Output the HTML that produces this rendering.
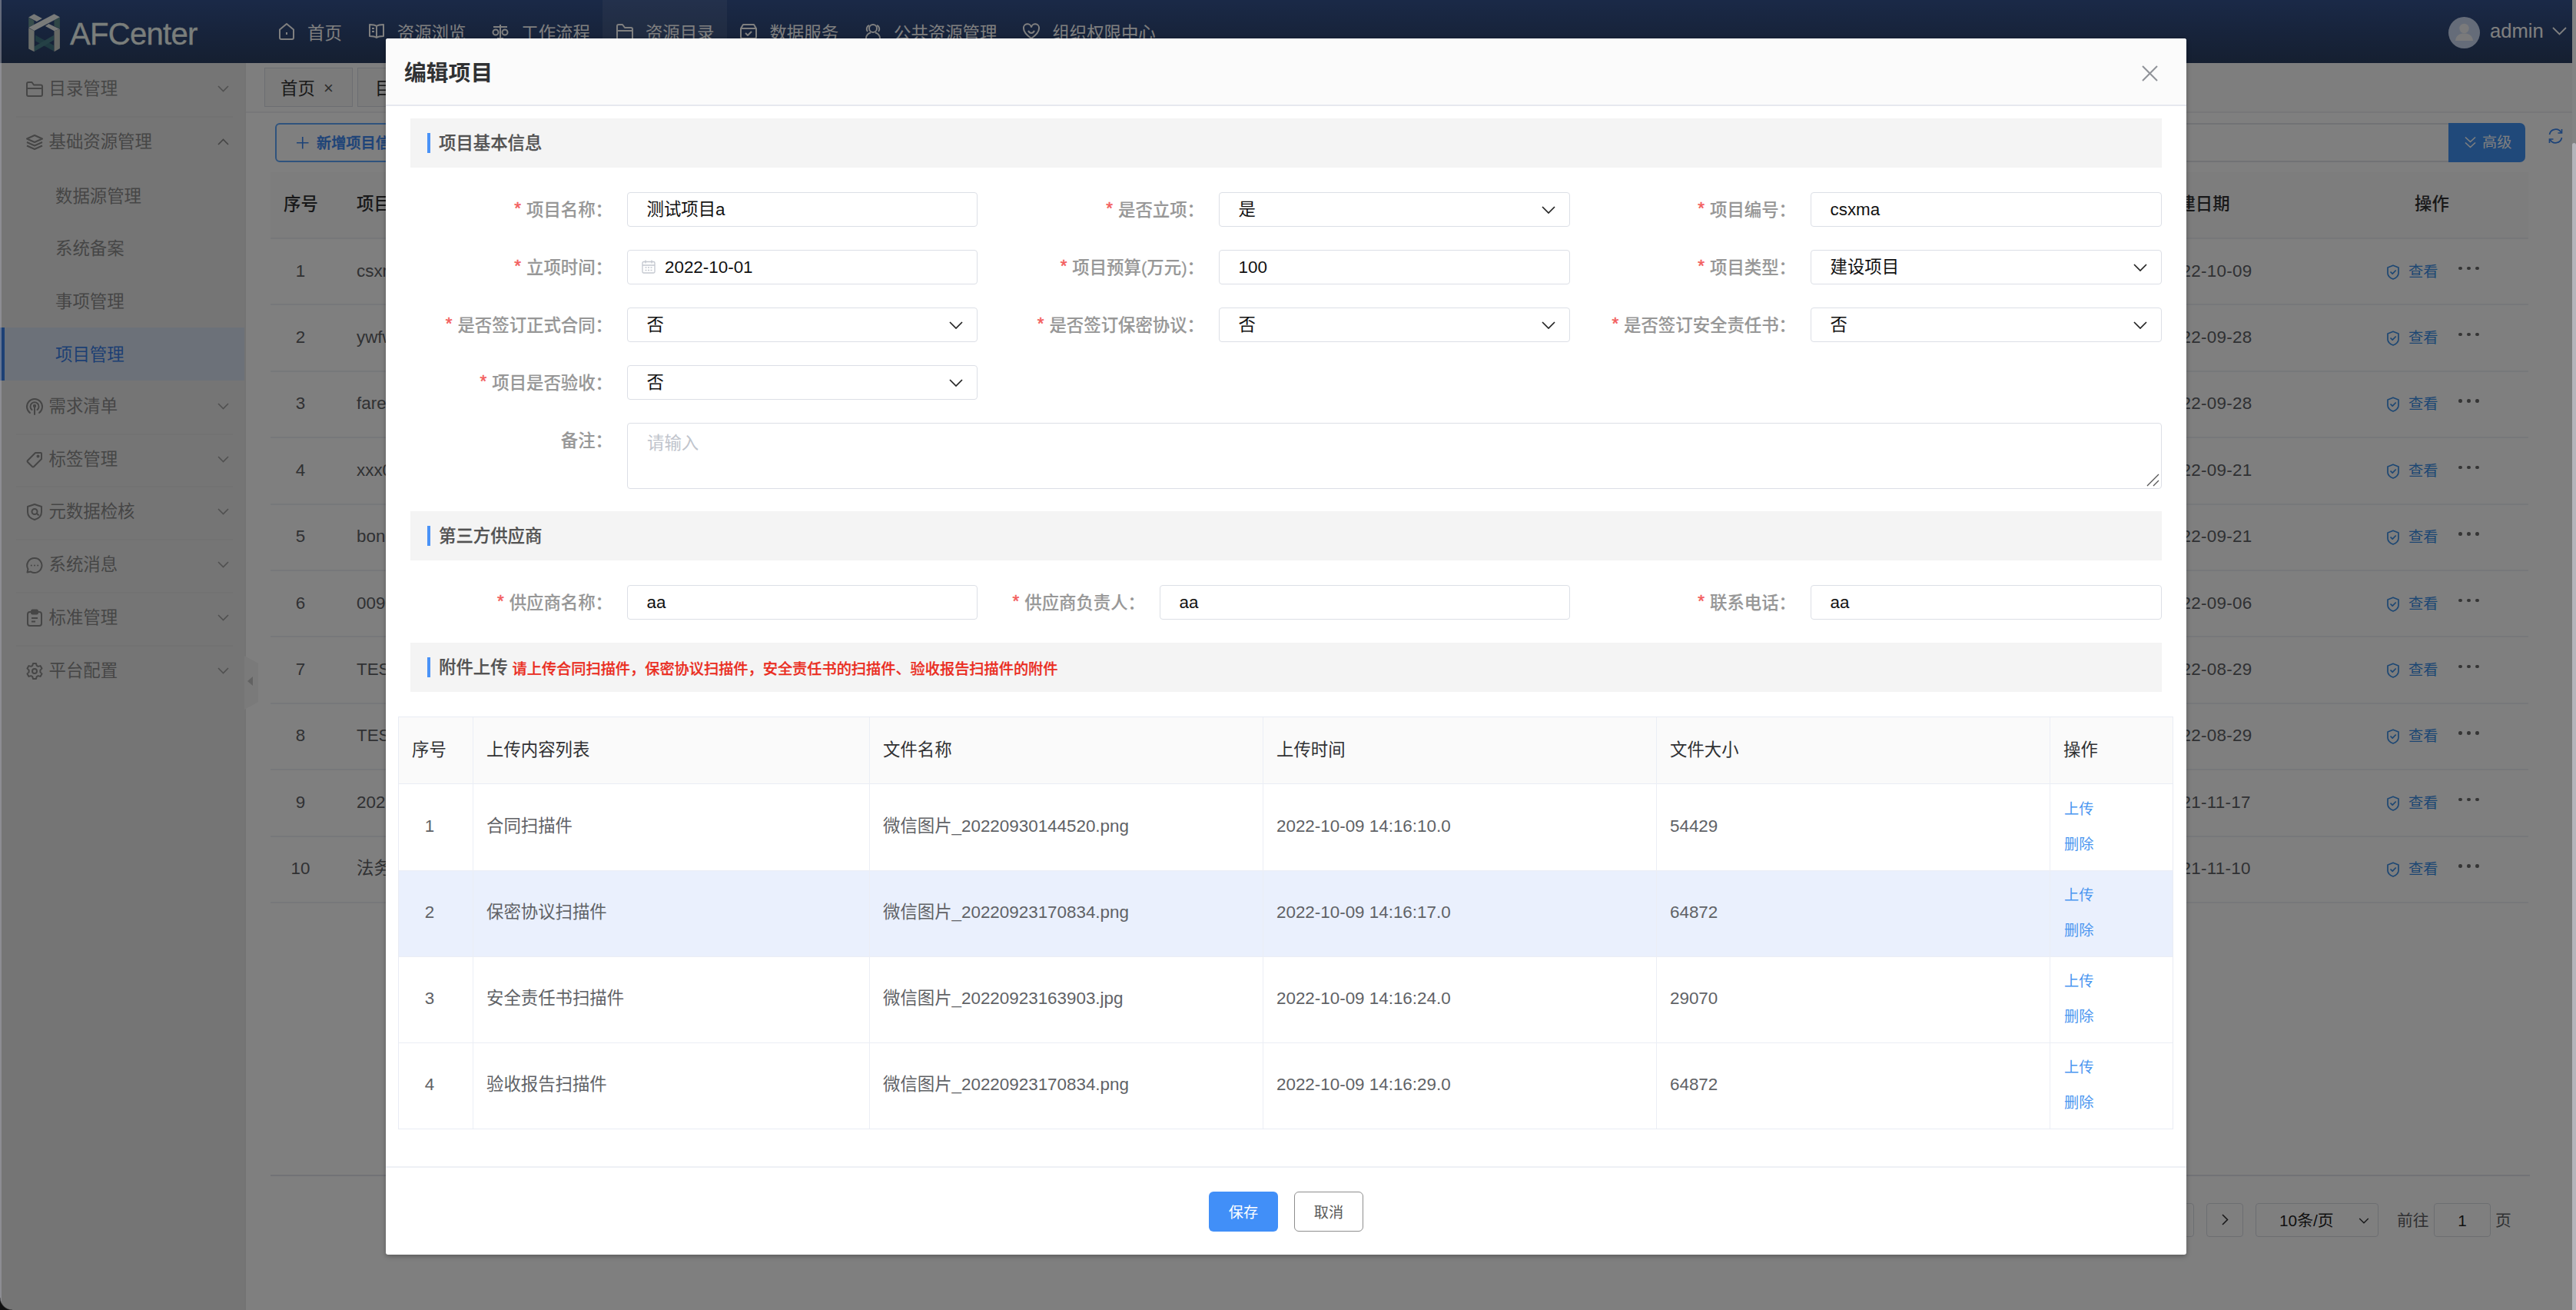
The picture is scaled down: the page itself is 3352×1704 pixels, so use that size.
<!DOCTYPE html>
<html lang="zh-CN">
<head>
<meta charset="utf-8">
<title>AFCenter - 编辑项目</title>
<style>
*{box-sizing:border-box;margin:0;padding:0}
html,body{width:3352px;height:1704px;overflow:hidden;background:#fff}
body{position:relative;font-family:"Liberation Sans","Noto Sans CJK SC",sans-serif;font-size:22.4px;color:#333;-webkit-font-smoothing:antialiased}
svg{display:block}
.abs{position:absolute}
/* ---------- app background ---------- */
#app{position:absolute;left:0;top:0;width:3352px;height:1704px;background:#fff;overflow:hidden}
#hdr{position:absolute;left:0;top:0;width:3352px;height:82px;background:linear-gradient(180deg,#35538f 0%,#2f4878 50%,#2b3f62 100%)}
#logo{position:absolute;left:37px;top:18px;width:41px;height:50px}
#brand{position:absolute;left:91px;top:12.500px;font-family:"Liberation Sans",sans-serif;font-size:40px;line-height:62px;color:#f4fcf7;letter-spacing:-0.700px;-webkit-text-stroke:0.3px #f4fcf7}
#nav{position:absolute;left:344.500px;top:0;height:82px;display:flex}
.nv{height:82px;padding:0 16.500px;display:flex;align-items:center;color:#fff;font-size:22.4px;white-space:nowrap}
.nv svg{width:24px;height:24px;margin-right:15px;flex:none;position:relative;top:0}
.nv.on{background:rgba(255,255,255,.09)}
.nv span{position:relative;top:-0.500px}
#user{position:absolute;left:3186px;top:22px;width:41px;height:41px;border-radius:50%;background:#cbd9f2;overflow:hidden}
#uname{position:absolute;left:3240px;top:25px;font-size:25.6px;line-height:30px;color:#fff}
#ucaret{position:absolute;left:3321px;top:35px;width:19px;height:11px}
/* sidebar */
#side{position:absolute;left:0;top:82px;width:320px;height:1622px;background:#ebebeb;border-right:2px solid #e6e6e6}
.mi{position:absolute;left:0;width:318px;height:68.8px;color:#8c8c8c;font-size:22.4px;line-height:68.8px}
.mi .ic{position:absolute;left:33px;top:22px;width:24px;height:24px}
.mi .tx{position:absolute;left:63.500px;top:0}
.mi .ar{position:absolute;left:283px;top:29px;width:15px;height:9px}
.mi.sub .tx{left:72px;top:2px}
.mi.sep:after{content:"";position:absolute;left:21px;right:15px;bottom:-2px;height:2px;background:#e5e5e5}
.mi.act{background:#d9e3f3;color:#3a7ee6}
.mi.act:before{content:"";position:absolute;left:0;top:0;width:6px;height:100%;background:#3b80ea}
/* main */
#tabs{position:absolute;left:320px;top:82px;width:3032px;height:65px;background:#fcfcfc;border-bottom:2px solid #eeeef2}
.tab{position:absolute;top:6px;height:51px;border:1.5px solid #d8dce5;background:#f6f6f6;font-size:22.4px;line-height:53px;color:#333}
/* overlay + modal */
#mask{position:absolute;left:0;top:0;width:3352px;height:1704px;background:rgba(0,0,0,.5)}
#dlg{position:absolute;left:502px;top:50px;width:2343px;height:1582px;background:#fff;border-radius:3px;box-shadow:0 2px 6px rgba(0,0,0,.3)}
#dh{position:absolute;left:0;top:0;width:100%;height:88px;background:#fbfbfb;border-bottom:2px solid #e6e8ef;border-radius:3px 3px 0 0}
#dt{position:absolute;left:24px;top:26.500px;font-size:28.8px;line-height:36px;font-weight:700;color:#303133}
#dx{position:absolute;left:2285px;top:35px;width:21px;height:21px}

/* background main */
.bgline{position:absolute;height:2px;background:#e6e9f0}
#addbtn{position:absolute;left:358px;top:160px;width:330px;height:51px;border:2px solid #5ea6fb;border-radius:6px;color:#3a86f0;font-weight:500;-webkit-text-stroke:0.4px currentColor;font-size:19.2px;line-height:50px;padding-left:52px;white-space:nowrap;background:#fff}
#addbtn svg{position:absolute;left:26px;top:16px;width:15.500px;height:15.500px}
#srch{position:absolute;left:2600px;top:160px;width:590px;height:51px;border:2px solid #e2e5eb;border-right:none;background:#fff}
#adv{position:absolute;left:3186px;top:160px;width:100px;height:51px;background:#4093f5;border-radius:0 7px 7px 0;color:#fff;font-size:19.2px;line-height:51px;padding-left:44px}
#adv svg{position:absolute;left:21px;top:17px;width:15px;height:17px}
#refresh{position:absolute;left:3315px;top:166px;width:21px;height:22px}
#th{position:absolute;left:352px;top:224px;width:2938px;height:87px;background:#fafafa;border-bottom:2px solid #eceef3}
.tht{position:absolute;top:225px;height:84px;line-height:82px;font-size:22.4px;color:#303133;font-weight:500;white-space:nowrap}
.tr{position:absolute;left:352px;width:2938px;height:86.4px;border-bottom:2px solid #eff1f5}
.td{position:absolute;font-size:22.4px;line-height:30px;color:#606266;white-space:nowrap}
.view{position:absolute;left:3105px;color:#3a8ee6;font-size:19.2px;line-height:26px;padding-left:29px;white-space:nowrap}
.view svg{position:absolute;left:0;top:3px;width:18px;height:20px}
.dots{position:absolute;left:3199px;width:28px;height:6px}
.dots i{position:absolute;top:0;width:4.600px;height:4.600px;border-radius:50%;background:#6a6a6a}
.pbox{position:absolute;top:1565px;height:44px;border:1.500px solid #d9dce3;border-radius:4px;background:#fff}
.ptx{position:absolute;top:1565px;height:44px;line-height:46px;font-size:20.8px;color:#606266;white-space:nowrap}
/* dialog form */
.sec{position:absolute;left:32px;width:2279px;height:64px;background:#f4f4f4}
.sec:before{content:"";position:absolute;left:21.5px;top:19px;width:4.500px;height:26px;background:#4a93f7}
.sec b{position:absolute;left:37px;top:0;line-height:66px;font-size:22.4px;font-weight:500;-webkit-text-stroke:0.25px currentColor;color:#525252;white-space:nowrap}
.sec b em{font-style:normal;font-size:19.2px;color:#ea2d1f;margin-left:6px;position:relative;top:0.500px}
.lb{position:absolute;height:48px;line-height:47px;text-align:right;font-size:22.4px;font-weight:500;-webkit-text-stroke:0.15px currentColor;color:#979797;white-space:nowrap}
.lb i{font-style:normal;color:#f35e5e;margin-right:7px;font-weight:400;-webkit-text-stroke:0.5px #f35e5e;position:relative;top:-3px;font-family:"Liberation Sans",sans-serif}
.in{position:absolute;height:44.500px;border:1.500px solid #dcdfe6;border-radius:4px;background:#fff;font-size:22.4px;line-height:44px;color:#111;padding-left:24.500px;white-space:nowrap}
.in .cv{position:absolute;right:18px;top:16.500px;width:18px;height:10px}
.in .cal{position:absolute;left:18px;top:12px;width:18px;height:18px}
#ta{position:absolute;left:314px;top:500px;width:1996.500px;height:85.500px;border:1.500px solid #dcdfe6;border-radius:4px;background:#fff;font-size:22.4px;line-height:30px;color:#c0c4cc;padding:10.500px 0 0 25px}
#ta svg{position:absolute;right:2px;bottom:2px;width:17px;height:17px}
/* dialog table */
#tb{position:absolute;left:16px;top:882px;width:2310px;height:536px;border:1.500px solid #e9ecf4;background:#fff}
#tbh{position:absolute;left:0;top:0;width:100%;height:87px;background:#fafafa;border-bottom:1.500px solid #e9ecf4}
.vl{position:absolute;top:0;width:1.500px;height:100%;background:#ebeef5}
.hl{position:absolute;left:0;width:100%;height:1.500px;background:#ebeef5}
.hx{position:absolute;top:0;height:87px;line-height:85px;font-size:22.4px;color:#303133;white-space:nowrap}
.cx{position:absolute;font-size:22.4px;line-height:30px;color:#606266;white-space:nowrap}
.lk{position:absolute;font-size:19.2px;line-height:26px;color:#4a96f0;white-space:nowrap}
#rowhi{position:absolute;left:0;top:200px;width:100%;height:112px;background:#eaf0fd}
#df{position:absolute;left:0;top:1466.500px;width:100%;height:2px;background:#eef0f5}
.btn{position:absolute;top:1500px;width:90px;height:52px;border-radius:6px;font-size:19.2px;line-height:53px;text-align:center}
#bsave{left:1071px;background:#418ff8;color:#fff;line-height:55.500px}
#bcancel{left:1182px;background:#fff;border:1.500px solid #8e8e8e;color:#5a5a5a}
</style>
</head>
<body>
<div id="app">
  <div id="hdr">
    <svg id="logo" viewBox="0 0 41 50"><polygon points="0.2,4.800 7.300,8.900 7.300,13.900 0.200,17.400" fill="#6f9a98"/><polygon points="33.500,8.300 40.900,4.500 40.900,19.400 33.500,16" fill="#5e8d8c"/><polygon points="9.100,27.800 33,40.900 33,48.400 9.100,35.300" fill="#3f7582"/><polygon points="33,27.800 33,34.300 7.600,48.900 7.600,42.400" fill="#4a828c"/><polygon points="0.200,18.200 7.600,22.200 7.600,49.300 0.200,45.400" fill="#d7dcd4"/><polygon points="33.500,22.200 40.900,19.700 40.900,45 33.500,49.300" fill="#cfd3cb"/><polygon points="7.300,0.200 17.900,6.100 10.800,10.100 0.200,4.500" fill="#eef3f0"/><polygon points="26.400,13.100 40.600,19.700 33.500,22.200 21.900,16.100" fill="#eef3f0"/><polygon points="33.500,0.200 40.900,4.200 7.600,22 0.200,17.700" fill="#f3f7f4"/></svg>
    <div id="brand">AFCenter</div>
    <div id="nav">
      <div class="nv"><svg viewBox="0 0 24 24" fill="none" stroke="#fff" stroke-width="2" stroke-linejoin="round"><path d="M3 9.5L12 2l9 7.5V20a2 2 0 0 1-2 2H5a2 2 0 0 1-2-2z"/><path d="M12 13v3"/></svg><span>首页</span></div>
      <div class="nv"><svg viewBox="0 0 24 24" fill="none" stroke="#fff" stroke-width="2" stroke-linejoin="round"><path d="M12 5v15M12 5c-2-1.5-5-2-9-2v15c4 0 7 .5 9 2 2-1.500 5-2 9-2V3c-4 0-7 .5-9 2z"/><path d="M6 8h3M6 12h3"/></svg><span>资源浏览</span></div>
      <div class="nv"><svg viewBox="0 0 24 24" fill="none" stroke="#fff" stroke-width="2"><path d="M12 3v18M3 6h18M8 21h8"/><circle cx="6" cy="13" r="3.500"/><circle cx="18" cy="13" r="3.500"/></svg><span>工作流程</span></div>
      <div class="nv on"><svg viewBox="0 0 24 24" fill="none" stroke="#fff" stroke-width="2" stroke-linejoin="round"><path d="M2 21V5a2 2 0 0 1 2-2h5l3 4h8a2 2 0 0 1 2 2v12"/><path d="M2 11h20"/></svg><span>资源目录</span></div>
      <div class="nv"><svg viewBox="0 0 24 24" fill="none" stroke="#fff" stroke-width="2" stroke-linejoin="round"><path d="M2 8l3-5h14l3 5v11a2 2 0 0 1-2 2H4a2 2 0 0 1-2-2z"/><path d="M2 8h20M8 14l3 3 5-5"/></svg><span>数据服务</span></div>
      <div class="nv"><svg viewBox="0 0 24 24" fill="none" stroke="#fff" stroke-width="2"><circle cx="12" cy="8" r="5"/><path d="M3 21c0-4 3-7 6-7.500M21 21c0-4-3-7-6-7.500"/><path d="M17 4a5 5 0 0 1 2 8M7 4a5 5 0 0 0-2 8"/></svg><span>公共资源管理</span></div>
      <div class="nv"><svg viewBox="0 0 24 24" fill="none" stroke="#fff" stroke-width="2"><path d="M12 21C5 16 2 12 2 8a5 5 0 0 1 10-1.500A5 5 0 0 1 22 8c0 4-3 8-10 13z"/><path d="M8 11c1 2 2.500 3 4 3s3-1 4-3"/></svg><span>组织权限中心</span></div>
    </div>
    <div id="user"><svg viewBox="0 0 41 41"><circle cx="20.500" cy="15" r="6.200" fill="#f4f5f7"/><path d="M9 31c1-7 5-9.500 11.500-9.500S31 24 32 31z" fill="#f4f5f7"/></svg></div>
    <div id="uname">admin</div>
    <svg id="ucaret" viewBox="0 0 19 11" fill="none" stroke="#fff" stroke-width="1.800"><path d="M1 1l8.500 8.500L18 1"/></svg>
  </div>
  <div id="side">
    <div class="mi sep" style="top:0.0px"><svg class="ic" viewBox="0 0 24 24" fill="none" stroke="#8c8c8c" stroke-width="2" stroke-linejoin="round"><path d="M2 19V5a2 2 0 0 1 2-2h4.500l2.500 3.500H20a2 2 0 0 1 2 2V19a2 2 0 0 1-2 2H4a2 2 0 0 1-2-2z"/><path d="M2 11h20"/></svg><span class="tx">目录管理</span><svg class="ar" viewBox="0 0 15 9" fill="none" stroke="#a0a0a0" stroke-width="1.600"><path d="M1 1l6.500 6.500L14 1"/></svg></div>
    <div class="mi" style="top:68.8px"><svg class="ic" viewBox="0 0 24 24" fill="none" stroke="#8c8c8c" stroke-width="2" stroke-linejoin="round"><path d="M12 3l10 4.500-10 4.500L2 7.500z"/><path d="M2 12l10 4.500L22 12M2 16.500L12 21l10-4.500"/></svg><span class="tx">基础资源管理</span><svg class="ar" viewBox="0 0 15 9" fill="none" stroke="#8a8a8a" stroke-width="1.600"><path d="M1 8l6.500-6.500L14 8"/></svg></div>
    <div class="mi sub" style="top:137.6px"><span class="tx">数据源管理</span></div>
    <div class="mi sub" style="top:206.4px"><span class="tx">系统备案</span></div>
    <div class="mi sub" style="top:275.2px"><span class="tx">事项管理</span></div>
    <div class="mi sub act" style="top:344.0px"><span class="tx">项目管理</span></div>
    <div class="mi sep" style="top:412.8px"><svg class="ic" viewBox="0 0 24 24" fill="none" stroke="#8c8c8c" stroke-width="2" stroke-linecap="round"><path d="M6 20a10 10 0 1 1 12 0"/><path d="M8.500 16a5.500 5.500 0 1 1 7 0"/><path d="M12 11.500V22"/><circle cx="12" cy="11" r="1.200" fill="#8c8c8c"/></svg><span class="tx">需求清单</span><svg class="ar" viewBox="0 0 15 9" fill="none" stroke="#a0a0a0" stroke-width="1.600"><path d="M1 1l6.500 6.500L14 1"/></svg></div>
    <div class="mi sep" style="top:481.6px"><svg class="ic" viewBox="0 0 24 24" fill="none" stroke="#8c8c8c" stroke-width="2" stroke-linejoin="round"><path d="M13 3h7a1 1 0 0 1 1 1v7L11 21a1.400 1.400 0 0 1-2 0l-6-6a1.400 1.400 0 0 1 0-2z"/><circle cx="16.500" cy="7.500" r="1" fill="#8c8c8c"/></svg><span class="tx">标签管理</span><svg class="ar" viewBox="0 0 15 9" fill="none" stroke="#a0a0a0" stroke-width="1.600"><path d="M1 1l6.500 6.500L14 1"/></svg></div>
    <div class="mi sep" style="top:550.4px"><svg class="ic" viewBox="0 0 24 24" fill="none" stroke="#8c8c8c" stroke-width="2" stroke-linejoin="round"><path d="M12 2l9 3v7c0 5-4 8.500-9 10-5-1.500-9-5-9-10V5z"/><circle cx="12" cy="11.500" r="3.500"/><path d="M15 14l2.500 2.500"/></svg><span class="tx">元数据检核</span><svg class="ar" viewBox="0 0 15 9" fill="none" stroke="#a0a0a0" stroke-width="1.600"><path d="M1 1l6.500 6.500L14 1"/></svg></div>
    <div class="mi sep" style="top:619.2px"><svg class="ic" viewBox="0 0 24 24" fill="none" stroke="#8c8c8c" stroke-width="2" stroke-linejoin="round"><path d="M12 3a9.500 9.500 0 1 1-5 17.600L2.500 21.500l1-4.300A9.500 9.500 0 0 1 12 3z"/><circle cx="7.800" cy="12.500" r="1" fill="#8c8c8c" stroke="none"/><circle cx="12" cy="12.500" r="1" fill="#8c8c8c" stroke="none"/><circle cx="16.200" cy="12.500" r="1" fill="#8c8c8c" stroke="none"/></svg><span class="tx">系统消息</span><svg class="ar" viewBox="0 0 15 9" fill="none" stroke="#a0a0a0" stroke-width="1.600"><path d="M1 1l6.500 6.500L14 1"/></svg></div>
    <div class="mi sep" style="top:688.0px"><svg class="ic" viewBox="0 0 24 24" fill="none" stroke="#8c8c8c" stroke-width="2" stroke-linejoin="round"><rect x="3" y="4" width="18" height="18" rx="3"/><rect x="8" y="1.500" width="8" height="5" rx="1.500" fill="#8c8c8c"/><path d="M8 12h8M8 16.500h5"/></svg><span class="tx">标准管理</span><svg class="ar" viewBox="0 0 15 9" fill="none" stroke="#a0a0a0" stroke-width="1.600"><path d="M1 1l6.500 6.500L14 1"/></svg></div>
    <div class="mi" style="top:756.8px"><svg class="ic" viewBox="0 0 24 24" fill="none" stroke="#8c8c8c" stroke-width="2" stroke-linejoin="round"><path d="M10 2h4l.7 2.800 2 1.100 2.800-.8 2 3.500-2.100 2v2.800l2.100 2-2 3.500-2.800-.8-2 1.100L14 22h-4l-.7-2.800-2-1.100-2.800.8-2-3.500 2.100-2v-2.800l-2.100-2 2-3.500 2.800.8 2-1.100z"/><circle cx="12" cy="12" r="3"/></svg><span class="tx">平台配置</span><svg class="ar" viewBox="0 0 15 9" fill="none" stroke="#a0a0a0" stroke-width="1.600"><path d="M1 1l6.500 6.500L14 1"/></svg></div>
    <div class="abs" style="left:318px;top:771px;width:18px;height:70px;background:#f4f4f4;clip-path:polygon(0 0,100% 14%,100% 86%,0 100%);border-radius:0 8px 8px 0"><svg viewBox="0 0 8 12" style="position:absolute;left:4px;top:26px;width:8px;height:14px"><path d="M7 0L0 6l7 6z" fill="#c4c4c4"/></svg></div>
  </div>
  <div id="tabs">
    <div class="tab" style="left:24px;width:115px;padding-left:20px">首页<span style="position:absolute;left:76px;top:-1.500px;font-size:22px;color:#5a5a5a;font-family:'Liberation Sans',sans-serif">×</span></div>
    <div class="tab" style="left:145px;width:170px;padding-left:22px">目录管理<span style="position:absolute;left:128px;top:-1.500px;font-size:22px;color:#5a5a5a">×</span></div>
    <div class="tab" style="left:321px;width:170px;padding-left:22px">项目管理<span style="position:absolute;left:128px;top:-1.500px;font-size:22px;color:#5a5a5a">×</span></div>
  </div>
  <div id="addbtn"><svg viewBox="0 0 17 17" stroke="#3a86f0" stroke-width="1.800"><path d="M8.500 0v17M0 8.500h17"/></svg>新增项目信息</div>
  <div id="srch"></div><div id="adv"><svg viewBox="0 0 15 17" fill="none" stroke="#fff" stroke-width="1.600"><path d="M1 1.500l6.500 6L14 1.500M1 8.500l6.500 6 6.500-6"/></svg>高级</div>
  <svg id="refresh" viewBox="0 0 21 22" fill="none" stroke="#3a86f0" stroke-width="1.700"><path d="M2.500 9A8.200 8.200 0 0 1 17.800 6.500M18.500 13A8.200 8.200 0 0 1 3.200 15.500"/><path d="M18.500 2v5h-5M2.500 20v-5h5"/></svg>
  <div id="th"></div>
  <div class="tht" style="left:369px">序号</div><div class="tht" style="left:464px">项目名称</div><div class="tht" style="left:2812px">创建日期</div><div class="tht" style="left:3142px">操作</div>
  <div class="tr" style="top:311.0px"></div>
  <div class="td" style="left:352px;width:78px;text-align:center;top:337.5px">1</div>
  <div class="td" style="left:464px;top:337.5px">csxma</div>
  <div class="td" style="left:2813px;letter-spacing:0.300px;top:337.5px">2022-10-09</div>
  <div class="view" style="top:340.5px"><svg viewBox="0 0 18 20" fill="none" stroke="#3a8ee6" stroke-width="1.700" stroke-linejoin="round"><path d="M9 1.200l7 2.800v7.200c0 3.600-3 6.300-7 7.800-4-1.500-7-4.200-7-7.800V4z"/><path d="M5.500 9.500l2.700 2.700 4.500-4.700"/></svg>查看</div>
  <div class="dots" style="top:346.5px"><i style="left:0"></i><i style="left:11px"></i><i style="left:22px"></i></div>
  <div class="tr" style="top:397.4px"></div>
  <div class="td" style="left:352px;width:78px;text-align:center;top:423.9px">2</div>
  <div class="td" style="left:464px;top:423.9px">ywfw01</div>
  <div class="td" style="left:2813px;letter-spacing:0.300px;top:423.9px">2022-09-28</div>
  <div class="view" style="top:426.9px"><svg viewBox="0 0 18 20" fill="none" stroke="#3a8ee6" stroke-width="1.700" stroke-linejoin="round"><path d="M9 1.200l7 2.800v7.200c0 3.600-3 6.300-7 7.800-4-1.500-7-4.200-7-7.800V4z"/><path d="M5.500 9.500l2.700 2.700 4.500-4.700"/></svg>查看</div>
  <div class="dots" style="top:432.9px"><i style="left:0"></i><i style="left:11px"></i><i style="left:22px"></i></div>
  <div class="tr" style="top:483.8px"></div>
  <div class="td" style="left:352px;width:78px;text-align:center;top:510.3px">3</div>
  <div class="td" style="left:464px;top:510.3px">fare01</div>
  <div class="td" style="left:2813px;letter-spacing:0.300px;top:510.3px">2022-09-28</div>
  <div class="view" style="top:513.3px"><svg viewBox="0 0 18 20" fill="none" stroke="#3a8ee6" stroke-width="1.700" stroke-linejoin="round"><path d="M9 1.200l7 2.800v7.200c0 3.600-3 6.300-7 7.800-4-1.500-7-4.200-7-7.800V4z"/><path d="M5.500 9.500l2.700 2.700 4.500-4.700"/></svg>查看</div>
  <div class="dots" style="top:519.3px"><i style="left:0"></i><i style="left:11px"></i><i style="left:22px"></i></div>
  <div class="tr" style="top:570.2px"></div>
  <div class="td" style="left:352px;width:78px;text-align:center;top:596.7px">4</div>
  <div class="td" style="left:464px;top:596.7px">xxx01</div>
  <div class="td" style="left:2813px;letter-spacing:0.300px;top:596.7px">2022-09-21</div>
  <div class="view" style="top:599.7px"><svg viewBox="0 0 18 20" fill="none" stroke="#3a8ee6" stroke-width="1.700" stroke-linejoin="round"><path d="M9 1.200l7 2.800v7.200c0 3.600-3 6.300-7 7.800-4-1.500-7-4.200-7-7.800V4z"/><path d="M5.500 9.500l2.700 2.700 4.500-4.700"/></svg>查看</div>
  <div class="dots" style="top:605.7px"><i style="left:0"></i><i style="left:11px"></i><i style="left:22px"></i></div>
  <div class="tr" style="top:656.6px"></div>
  <div class="td" style="left:352px;width:78px;text-align:center;top:683.1px">5</div>
  <div class="td" style="left:464px;top:683.1px">bond</div>
  <div class="td" style="left:2813px;letter-spacing:0.300px;top:683.1px">2022-09-21</div>
  <div class="view" style="top:686.1px"><svg viewBox="0 0 18 20" fill="none" stroke="#3a8ee6" stroke-width="1.700" stroke-linejoin="round"><path d="M9 1.200l7 2.800v7.200c0 3.600-3 6.300-7 7.800-4-1.500-7-4.200-7-7.800V4z"/><path d="M5.500 9.500l2.700 2.700 4.500-4.700"/></svg>查看</div>
  <div class="dots" style="top:692.1px"><i style="left:0"></i><i style="left:11px"></i><i style="left:22px"></i></div>
  <div class="tr" style="top:743.0px"></div>
  <div class="td" style="left:352px;width:78px;text-align:center;top:769.5px">6</div>
  <div class="td" style="left:464px;top:769.5px">0090</div>
  <div class="td" style="left:2813px;letter-spacing:0.300px;top:769.5px">2022-09-06</div>
  <div class="view" style="top:772.5px"><svg viewBox="0 0 18 20" fill="none" stroke="#3a8ee6" stroke-width="1.700" stroke-linejoin="round"><path d="M9 1.200l7 2.800v7.200c0 3.600-3 6.300-7 7.800-4-1.500-7-4.200-7-7.800V4z"/><path d="M5.500 9.500l2.700 2.700 4.500-4.700"/></svg>查看</div>
  <div class="dots" style="top:778.5px"><i style="left:0"></i><i style="left:11px"></i><i style="left:22px"></i></div>
  <div class="tr" style="top:829.4px"></div>
  <div class="td" style="left:352px;width:78px;text-align:center;top:855.9px">7</div>
  <div class="td" style="left:464px;top:855.9px">TEST2</div>
  <div class="td" style="left:2813px;letter-spacing:0.300px;top:855.9px">2022-08-29</div>
  <div class="view" style="top:858.9px"><svg viewBox="0 0 18 20" fill="none" stroke="#3a8ee6" stroke-width="1.700" stroke-linejoin="round"><path d="M9 1.200l7 2.800v7.200c0 3.600-3 6.300-7 7.800-4-1.500-7-4.200-7-7.800V4z"/><path d="M5.500 9.500l2.700 2.700 4.500-4.700"/></svg>查看</div>
  <div class="dots" style="top:864.9px"><i style="left:0"></i><i style="left:11px"></i><i style="left:22px"></i></div>
  <div class="tr" style="top:915.8px"></div>
  <div class="td" style="left:352px;width:78px;text-align:center;top:942.3px">8</div>
  <div class="td" style="left:464px;top:942.3px">TEST1</div>
  <div class="td" style="left:2813px;letter-spacing:0.300px;top:942.3px">2022-08-29</div>
  <div class="view" style="top:945.3px"><svg viewBox="0 0 18 20" fill="none" stroke="#3a8ee6" stroke-width="1.700" stroke-linejoin="round"><path d="M9 1.200l7 2.800v7.200c0 3.600-3 6.300-7 7.800-4-1.500-7-4.200-7-7.800V4z"/><path d="M5.500 9.500l2.700 2.700 4.500-4.700"/></svg>查看</div>
  <div class="dots" style="top:951.3px"><i style="left:0"></i><i style="left:11px"></i><i style="left:22px"></i></div>
  <div class="tr" style="top:1002.2px"></div>
  <div class="td" style="left:352px;width:78px;text-align:center;top:1028.7px">9</div>
  <div class="td" style="left:464px;top:1028.7px">2021xm</div>
  <div class="td" style="left:2813px;letter-spacing:0.300px;top:1028.7px">2021-11-17</div>
  <div class="view" style="top:1031.7px"><svg viewBox="0 0 18 20" fill="none" stroke="#3a8ee6" stroke-width="1.700" stroke-linejoin="round"><path d="M9 1.200l7 2.800v7.200c0 3.600-3 6.300-7 7.800-4-1.500-7-4.200-7-7.800V4z"/><path d="M5.500 9.500l2.700 2.700 4.500-4.700"/></svg>查看</div>
  <div class="dots" style="top:1037.7px"><i style="left:0"></i><i style="left:11px"></i><i style="left:22px"></i></div>
  <div class="tr" style="top:1088.6px"></div>
  <div class="td" style="left:352px;width:78px;text-align:center;top:1115.1px">10</div>
  <div class="td" style="left:464px;top:1115.1px">法务项目</div>
  <div class="td" style="left:2813px;letter-spacing:0.300px;top:1115.1px">2021-11-10</div>
  <div class="view" style="top:1118.1px"><svg viewBox="0 0 18 20" fill="none" stroke="#3a8ee6" stroke-width="1.700" stroke-linejoin="round"><path d="M9 1.200l7 2.800v7.200c0 3.600-3 6.300-7 7.800-4-1.500-7-4.200-7-7.800V4z"/><path d="M5.500 9.500l2.700 2.700 4.500-4.700"/></svg>查看</div>
  <div class="dots" style="top:1124.1px"><i style="left:0"></i><i style="left:11px"></i><i style="left:22px"></i></div>
  <div class="bgline" style="left:352px;top:1528px;width:2940px;background:#e2e5ec"></div>
  <div class="pbox" style="left:2790px;width:65px"></div>
  <div class="pbox" style="left:2871px;width:48px"><svg viewBox="0 0 9 15" style="position:absolute;left:19px;top:13px;width:9px;height:15px" fill="none" stroke="#303133" stroke-width="1.600"><path d="M1 1l6.500 6.500L1 14"/></svg></div>
  <div class="pbox" style="left:2935px;width:160px"><svg viewBox="0 0 15 9" style="position:absolute;left:133px;top:18px;width:14px;height:8px" fill="none" stroke="#303133" stroke-width="1.600"><path d="M1 1l6.500 6.500L14 1"/></svg></div>
  <div class="ptx" style="left:2966px;color:#222">10条/页</div>
  <div class="ptx" style="left:3119px">前往</div>
  <div class="pbox" style="left:3167px;width:74px"></div><div class="ptx" style="left:3167px;width:74px;text-align:center;color:#222">1</div>
  <div class="ptx" style="left:3247px">页</div>
</div>
<div id="mask"></div>
<div id="dlg">
  <div id="dh"><div id="dt">编辑项目</div>
    <svg id="dx" viewBox="0 0 21 21" fill="none" stroke="#909399" stroke-width="2"><path d="M1 1l19 19M20 1L1 20"/></svg>
  </div>
  <div class="sec" style="top:104px"><b>项目基本信息</b></div>
  <div class="lb" style="left:-105px;width:400px;top:200px"><i>*</i>项目名称：</div><div class="in" style="left:314px;width:455.5px;top:200px">测试项目a</div>
  <div class="lb" style="left:665px;width:400px;top:200px"><i>*</i>是否立项：</div><div class="in" style="left:1084px;width:456.5px;top:200px"><svg class="cv" viewBox="0 0 18 10" fill="none" stroke="#222" stroke-width="1.700"><path d="M1 1l8 8 8-8"/></svg>是</div>
  <div class="lb" style="left:1435px;width:400px;top:200px"><i>*</i>项目编号：</div><div class="in" style="left:1854px;width:456.5px;top:200px">csxma</div>
  <div class="lb" style="left:-105px;width:400px;top:275px"><i>*</i>立项时间：</div><div class="in" style="left:314px;width:455.5px;top:275px;padding-left:48px"><svg class="cal" viewBox="0 0 18 18" fill="none" stroke="#c3c7cf" stroke-width="1.300"><rect x="1" y="2.500" width="16" height="14.500" rx="1.500"/><path d="M1 7h16M5 .5v4M13 .5v4M4.500 10h2M8 10h2M11.500 10h2M4.500 13.500h2M8 13.500h2M11.500 13.500h2"/></svg>2022-10-01</div>
  <div class="lb" style="left:665px;width:400px;top:275px"><i>*</i>项目预算(万元)：</div><div class="in" style="left:1084px;width:456.5px;top:275px">100</div>
  <div class="lb" style="left:1435px;width:400px;top:275px"><i>*</i>项目类型：</div><div class="in" style="left:1854px;width:456.5px;top:275px"><svg class="cv" viewBox="0 0 18 10" fill="none" stroke="#222" stroke-width="1.700"><path d="M1 1l8 8 8-8"/></svg>建设项目</div>
  <div class="lb" style="left:-105px;width:400px;top:350px"><i>*</i>是否签订正式合同：</div><div class="in" style="left:314px;width:455.5px;top:350px"><svg class="cv" viewBox="0 0 18 10" fill="none" stroke="#222" stroke-width="1.700"><path d="M1 1l8 8 8-8"/></svg>否</div>
  <div class="lb" style="left:665px;width:400px;top:350px"><i>*</i>是否签订保密协议：</div><div class="in" style="left:1084px;width:456.5px;top:350px"><svg class="cv" viewBox="0 0 18 10" fill="none" stroke="#222" stroke-width="1.700"><path d="M1 1l8 8 8-8"/></svg>否</div>
  <div class="lb" style="left:1435px;width:400px;top:350px"><i>*</i>是否签订安全责任书：</div><div class="in" style="left:1854px;width:456.5px;top:350px"><svg class="cv" viewBox="0 0 18 10" fill="none" stroke="#222" stroke-width="1.700"><path d="M1 1l8 8 8-8"/></svg>否</div>
  <div class="lb" style="left:-105px;width:400px;top:425px"><i>*</i>项目是否验收：</div><div class="in" style="left:314px;width:455.5px;top:425px"><svg class="cv" viewBox="0 0 18 10" fill="none" stroke="#222" stroke-width="1.700"><path d="M1 1l8 8 8-8"/></svg>否</div>
  <div class="lb" style="left:-105px;width:400px;top:500px">备注：</div>
  <div id="ta" style="left:314px;top:500px">请输入<svg viewBox="0 0 17 17" stroke="#555" stroke-width="1.300"><path d="M1 16L16 1M9 16l7-7"/></svg></div>
  <div class="sec" style="top:615px"><b>第三方供应商</b></div>
  <div class="lb" style="left:-105px;width:400px;top:711px"><i>*</i>供应商名称：</div><div class="in" style="left:314px;width:455.5px;top:711px">aa</div>
  <div class="lb" style="left:588px;width:400px;top:711px"><i>*</i>供应商负责人：</div><div class="in" style="left:1007px;width:534px;top:711px">aa</div>
  <div class="lb" style="left:1435px;width:400px;top:711px"><i>*</i>联系电话：</div><div class="in" style="left:1854px;width:456.5px;top:711px">aa</div>
  <div class="sec" style="top:786px"><b>附件上传<em>请上传合同扫描件，保密协议扫描件，安全责任书的扫描件、验收报告扫描件的附件</em></b></div>
  <div id="tb" style="left:16px;top:882px;width:2310px;height:537px"><div id="tbh"></div>
    <div id="rowhi" style="top:198.5px"></div>
    <div class="vl" style="left:95.5px"></div>
    <div class="vl" style="left:611.5px"></div>
    <div class="vl" style="left:1123.5px"></div>
    <div class="vl" style="left:1635.5px"></div>
    <div class="vl" style="left:2147.5px"></div>
    <div class="hl" style="top:198.5px"></div>
    <div class="hl" style="top:310.5px"></div>
    <div class="hl" style="top:422.5px"></div>
    <div class="hx" style="left:17px">序号</div>
    <div class="hx" style="left:114px">上传内容列表</div>
    <div class="hx" style="left:630px">文件名称</div>
    <div class="hx" style="left:1142px">上传时间</div>
    <div class="hx" style="left:1654px">文件大小</div>
    <div class="hx" style="left:2166px">操作</div>
    <div class="cx" style="left:20px;width:40px;text-align:center;top:127px">1</div>
    <div class="cx" style="left:114px;top:127px">合同扫描件</div>
    <div class="cx" style="left:630px;top:127px">微信图片_20220930144520.png</div>
    <div class="cx" style="left:1142px;top:127px">2022-10-09 14:16:10.0</div>
    <div class="cx" style="left:1654px;top:127px">54429</div>
    <div class="lk" style="left:2167px;top:107px">上传</div>
    <div class="lk" style="left:2167px;top:153px">删除</div>
    <div class="cx" style="left:20px;width:40px;text-align:center;top:239px">2</div>
    <div class="cx" style="left:114px;top:239px">保密协议扫描件</div>
    <div class="cx" style="left:630px;top:239px">微信图片_20220923170834.png</div>
    <div class="cx" style="left:1142px;top:239px">2022-10-09 14:16:17.0</div>
    <div class="cx" style="left:1654px;top:239px">64872</div>
    <div class="lk" style="left:2167px;top:219px">上传</div>
    <div class="lk" style="left:2167px;top:265px">删除</div>
    <div class="cx" style="left:20px;width:40px;text-align:center;top:351px">3</div>
    <div class="cx" style="left:114px;top:351px">安全责任书扫描件</div>
    <div class="cx" style="left:630px;top:351px">微信图片_20220923163903.jpg</div>
    <div class="cx" style="left:1142px;top:351px">2022-10-09 14:16:24.0</div>
    <div class="cx" style="left:1654px;top:351px">29070</div>
    <div class="lk" style="left:2167px;top:331px">上传</div>
    <div class="lk" style="left:2167px;top:377px">删除</div>
    <div class="cx" style="left:20px;width:40px;text-align:center;top:463px">4</div>
    <div class="cx" style="left:114px;top:463px">验收报告扫描件</div>
    <div class="cx" style="left:630px;top:463px">微信图片_20220923170834.png</div>
    <div class="cx" style="left:1142px;top:463px">2022-10-09 14:16:29.0</div>
    <div class="cx" style="left:1654px;top:463px">64872</div>
    <div class="lk" style="left:2167px;top:443px">上传</div>
    <div class="lk" style="left:2167px;top:489px">删除</div></div>
  <div id="df"></div>
  <div class="btn" id="bsave" style="left:1071px;top:1500px">保存</div><div class="btn" id="bcancel" style="left:1182px;top:1500px">取消</div>
</div>
<div class="abs" style="left:3347px;top:0;width:5px;height:1704px;background:#838383"></div>
<div class="abs" style="left:3347px;top:186px;width:5px;height:1518px;background:#b4b4ba;border-radius:3px 3px 0 0"></div>
<div class="abs" style="left:0;top:0;width:2px;height:1704px;background:rgba(160,160,170,.55)"></div>
<div class="abs" style="left:0;top:1688px;width:16px;height:16px;background:radial-gradient(circle at 100% 0,rgba(0,0,0,0) 15px,#111 16.500px)"></div>
</body>
</html>
